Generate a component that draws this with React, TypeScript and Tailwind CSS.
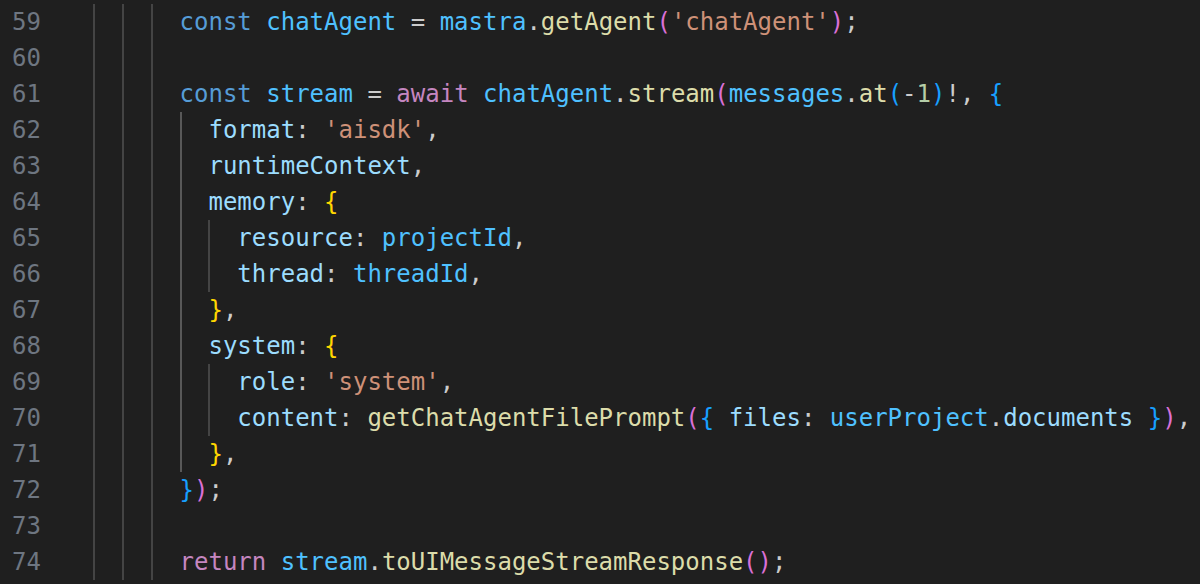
import React from 'react';

type Tok = [string, string];

const KW = 'text-[#569cd6]';
const CTRL = 'text-[#c586c0]';
const VAR = 'text-[#4fc1ff]';
const PROP = 'text-[#9cdcfe]';
const FN = 'text-[#dcdcaa]';
const STR = 'text-[#ce9178]';
const NUM = 'text-[#b5cea8]';
const P = 'text-[#cccccc]';
const B1 = 'text-[#ffd700]';
const B2 = 'text-[#da70d6]';
const B3 = 'text-[#179fff]';

// indent = number of 2-space levels
const lines: { n: number; indent: number; toks: Tok[] }[] = [
  {
    n: 59,
    indent: 4,
    toks: [
      ['const', KW], [' ', P], ['chatAgent', VAR], [' = ', P], ['mastra', VAR], ['.', P],
      ['getAgent', FN], ['(', B2], ["'chatAgent'", STR], [')', B2], [';', P],
    ],
  },
  { n: 60, indent: 4, toks: [] },
  {
    n: 61,
    indent: 4,
    toks: [
      ['const', KW], [' ', P], ['stream', VAR], [' = ', P], ['await', CTRL], [' ', P],
      ['chatAgent', VAR], ['.', P], ['stream', FN], ['(', B2], ['messages', VAR], ['.', P],
      ['at', FN], ['(', B3], ['-', P], ['1', NUM], [')', B3], ['!, ', P], ['{', B3],
    ],
  },
  { n: 62, indent: 5, toks: [['format', PROP], [': ', P], ["'aisdk'", STR], [',', P]] },
  { n: 63, indent: 5, toks: [['runtimeContext', PROP], [',', P]] },
  { n: 64, indent: 5, toks: [['memory', PROP], [': ', P], ['{', B1]] },
  { n: 65, indent: 6, toks: [['resource', PROP], [': ', P], ['projectId', VAR], [',', P]] },
  { n: 66, indent: 6, toks: [['thread', PROP], [': ', P], ['threadId', VAR], [',', P]] },
  { n: 67, indent: 5, toks: [['}', B1], [',', P]] },
  { n: 68, indent: 5, toks: [['system', PROP], [': ', P], ['{', B1]] },
  { n: 69, indent: 6, toks: [['role', PROP], [': ', P], ["'system'", STR], [',', P]] },
  {
    n: 70,
    indent: 6,
    toks: [
      ['content', PROP], [': ', P], ['getChatAgentFilePrompt', FN], ['(', B2], ['{', B3],
      [' ', P], ['files', PROP], [': ', P], ['userProject', VAR], ['.', P], ['documents', PROP],
      [' ', P], ['}', B3], [')', B2], [',', P],
    ],
  },
  { n: 71, indent: 5, toks: [['}', B1], [',', P]] },
  { n: 72, indent: 4, toks: [['}', B3], [')', B2], [';', P]] },
  { n: 73, indent: 4, toks: [] },
  {
    n: 74,
    indent: 4,
    toks: [
      ['return', CTRL], [' ', P], ['stream', VAR], ['.', P], ['toUIMessageStreamResponse', FN],
      ['(', B2], [')', B2], [';', P],
    ],
  },
];

function guideClass(i: number) {
  if (i === 0) return 'inline-block h-full w-[2ch] shrink-0';
  // the guide of the options object is the active one
  if (i === 4) return 'inline-block h-full w-[2ch] shrink-0 border-l-2 border-[#585858]';
  return 'inline-block h-full w-[2ch] shrink-0 border-l-2 border-[#444444]';
}

function CodeLine({ n, indent, toks }: { n: number; indent: number; toks: Tok[] }) {
  return (
    <div className="flex h-[36px] leading-[36px]">
      {/* gutter */}
      <div className="w-[64px] shrink-0 pr-[23px] text-right text-[#6e7681]">{n}</div>
      {/* indent guides */}
      {Array.from({ length: indent }).map((_, i) => (
        <span key={i} className={guideClass(i)} />
      ))}
      <div className="whitespace-pre">
        {toks.map(([t, c], i) => (
          <span key={i} className={c}>
            {t}
          </span>
        ))}
      </div>
    </div>
  );
}

export default function App() {
  return (
    <div className="h-[584px] w-[1200px] overflow-hidden bg-[#1f1f1f] pt-[4px] font-['DejaVu_Sans_Mono',monospace] text-[24px]">
      {lines.map((l) => (
        <CodeLine key={l.n} {...l} />
      ))}
    </div>
  );
}
